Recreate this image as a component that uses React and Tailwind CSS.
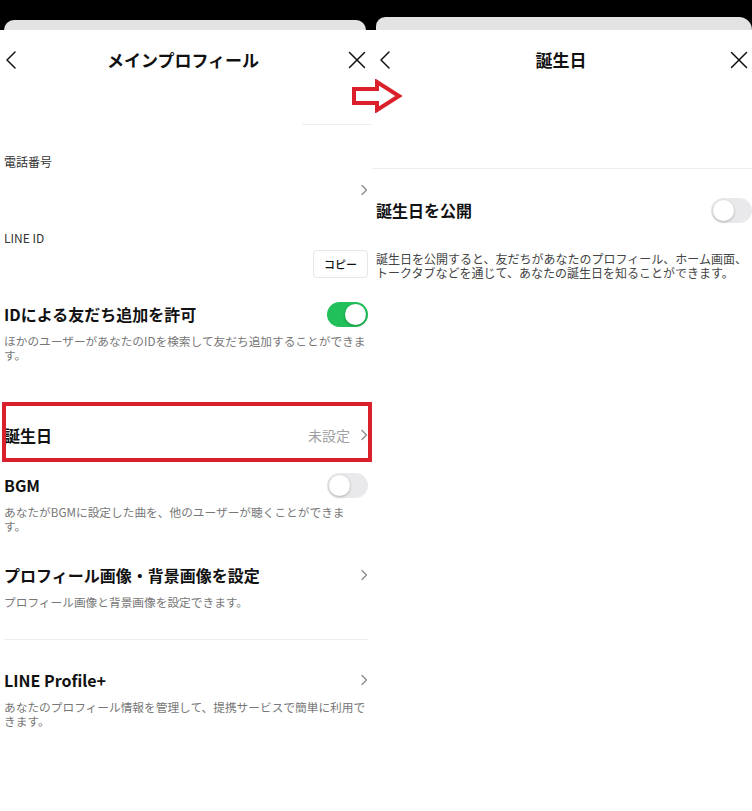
import React from 'react';

const font = { fontFamily: '"Noto Sans CJK JP", "Noto Sans", sans-serif' };

const Back = () => (
  <svg width="14" height="20" viewBox="0 0 14 20" fill="none" stroke="#111" strokeWidth="1.5" strokeLinecap="round" strokeLinejoin="round">
    <path d="M11 2 L3 10 L11 18" />
  </svg>
);

const Close = () => (
  <svg width="18" height="18" viewBox="0 0 18 18" fill="none" stroke="#111" strokeWidth="1.5" strokeLinecap="round">
    <path d="M1.5 1.5 L16.5 16.5 M16.5 1.5 L1.5 16.5" />
  </svg>
);

const Chevron = () => (
  <svg width="8" height="12" viewBox="0 0 8 12" fill="none" stroke="#8a8a8a" strokeWidth="1.3" strokeLinecap="round" strokeLinejoin="round">
    <path d="M2 1.5 L6.5 6 L2 10.5" />
  </svg>
);

const Toggle = ({ on }) => (
  <div className={`w-[41px] h-[25px] rounded-full p-[2px] flex ${on ? 'bg-[#21c05a] justify-end' : 'bg-[#e9e9eb] justify-start'}`}>
    <div className="w-[21px] h-[21px] rounded-full bg-white shadow-[0_1px_3px_rgba(0,0,0,0.25)]" />
  </div>
);

const Desc = ({ children, narrow }) => (
  <p className={`${narrow ? 'w-[346px]' : 'w-[364px]'} text-[11.7px] leading-[14px] text-[#777]`}>{children}</p>
);

export default function App() {
  return (
    <div className="relative w-[752px] h-[811px] bg-white flex overflow-hidden" style={font}>
      {/* Left panel */}
      <div className="w-[372px] flex flex-col">
        <div className="h-[30px] bg-black pt-[20px] pl-[4px] pr-[6px]">
          <div className="h-[10px] bg-[#e3e3e3] rounded-t-[10px]" />
        </div>
        <div className="h-[60px] flex items-center justify-between pl-[4px] pr-[6px]">
          <Back />
          <div className="text-[17px] font-bold text-[#111]">メインプロフィール</div>
          <Close />
        </div>
        <div className="h-[34px]" />
        <div className="ml-auto w-[70px] h-px bg-[#eeeeee]" />

        <div className="px-[4px] flex flex-col">
          <div className="mt-[29px] text-[12px] leading-[16px] text-[#333]">電話番号</div>
          <div className="mt-[14px] h-[12px] flex justify-end"><Chevron /></div>
          <div className="mt-[34px] text-[12px] leading-[16px] text-[#333]">LINE ID</div>
          <div className="mt-[4px] flex justify-end">
            <div className="w-[55px] h-[28px] border border-[#e6e6e6] rounded-[4px] flex items-center justify-center text-[11px] font-medium text-[#111]">コピー</div>
          </div>

          <div className="mt-[23px] h-[26px] flex items-center justify-between">
            <div className="text-[16px] font-bold text-[#111]">IDによる友だち追加を許可</div>
            <Toggle on />
          </div>
          <div className="mt-[7px]">
            <Desc>ほかのユーザーがあなたのIDを検索して友だち追加することができます。</Desc>
          </div>
        </div>

        <div className="relative mt-[40px] h-[60px] px-[4px] flex items-center pt-[6px]">
          <div className="text-[16px] font-bold text-[#111]">誕生日</div>
          <div className="ml-auto flex items-center gap-[10px]">
            <span className="text-[14px] text-[#a0a0a0]">未設定</span>
            <Chevron />
          </div>
          <div className="absolute left-[2px] right-0 top-0 bottom-0 border-4 border-[#d9202b]" />
        </div>

        <div className="px-[4px] flex flex-col">
          <div className="mt-[11px] h-[24px] flex items-center justify-between">
            <div className="text-[16px] font-bold text-[#111]">BGM</div>
            <Toggle />
          </div>
          <div className="mt-[8px]">
            <Desc narrow>あなたがBGMに設定した曲を、他のユーザーが聴くことができます。</Desc>
          </div>

          <div className="mt-[30px] h-[24px] flex items-center justify-between">
            <div className="text-[16px] font-bold text-[#111]">プロフィール画像・背景画像を設定</div>
            <Chevron />
          </div>
          <div className="mt-[8px]">
            <Desc>プロフィール画像と背景画像を設定できます。</Desc>
          </div>

          <div className="mt-[30px] h-px bg-[#eeeeee]" />

          <div className="mt-[28px] h-[24px] flex items-center justify-between">
            <div className="text-[16px] font-bold text-[#111]">LINE Profile+</div>
            <Chevron />
          </div>
          <div className="mt-[8px]">
            <Desc>あなたのプロフィール情報を管理して、提携サービスで簡単に利用できます。</Desc>
          </div>
        </div>
      </div>

      {/* Right panel */}
      <div className="flex-1 flex flex-col">
        <div className="h-[30px] bg-black pt-[17px] pl-[4px]">
          <div className="h-[13px] bg-[#e3e3e3] rounded-tl-[10px] rounded-tr-[14px]" />
        </div>
        <div className="h-[60px] flex items-center justify-between pl-[6px] pr-[4px]">
          <Back />
          <div className="text-[17px] font-bold text-[#111]">誕生日</div>
          <Close />
        </div>
        <div className="mt-[78px] h-px bg-[#eeeeee]" />
        <div className="pl-[4px] flex flex-col">
          <div className="mt-[29px] h-[24px] flex items-center justify-between">
            <div className="text-[16px] font-bold text-[#111]">誕生日を公開</div>
            <Toggle />
          </div>
          <div className="mt-[30px] text-[12px] leading-[14px] text-[#444]">
            誕生日を公開すると、友だちがあなたのプロフィール、ホーム画面、トークタブなどを通じて、あなたの誕生日を知ることができます。
          </div>
        </div>
      </div>

      {/* Red arrow annotation */}
      <svg className="absolute left-[351px] top-[79px]" width="52" height="34" viewBox="0 0 52 34">
        <polygon points="3,10 26,10 26,3 48,17 26,31 26,24 3,24" fill="white" stroke="#d9202b" strokeWidth="4" strokeLinejoin="miter" />
      </svg>
    </div>
  );
}
